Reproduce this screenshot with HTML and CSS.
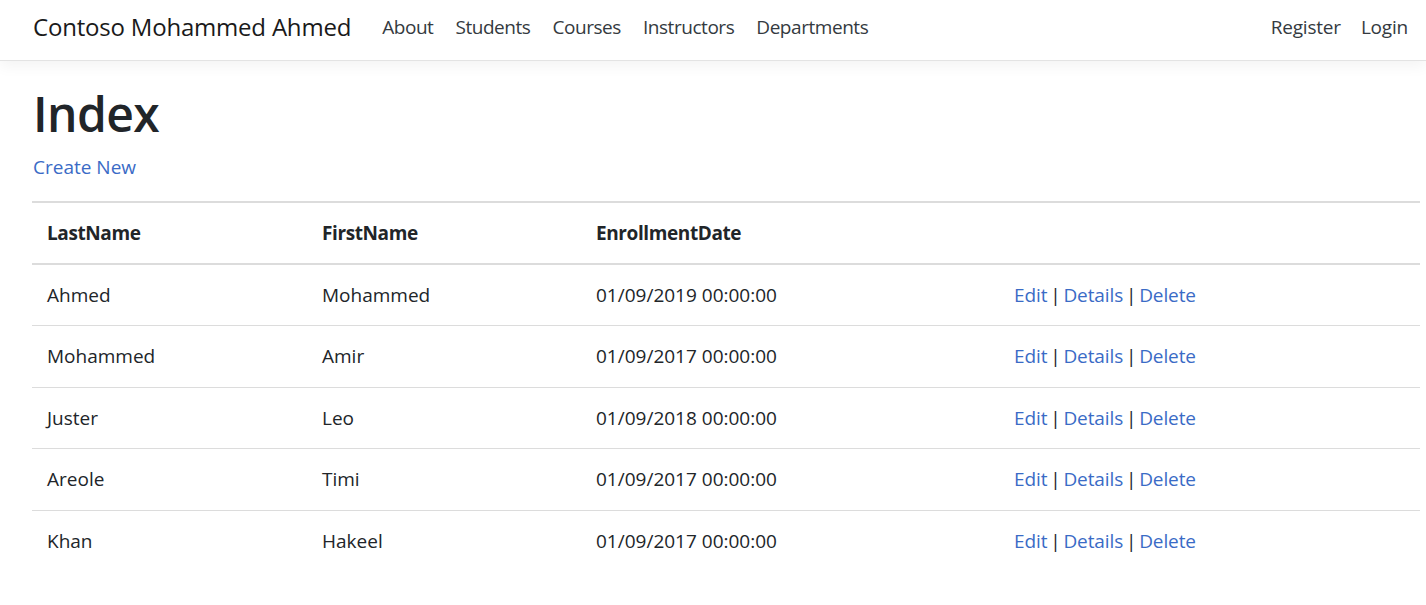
FILE: index.html
```html
<!DOCTYPE html>
<html lang="en">
<head>
<meta charset="utf-8">
<title>Index - Contoso</title>
<link rel="stylesheet" href="styles.css">
</head>
<body>
<header class="navbar">
  <a class="brand" href="#">Contoso Mohammed Ahmed</a>
  <nav class="nav-main">
    <a class="nav-link" href="#">About</a>
    <a class="nav-link" href="#">Students</a>
    <a class="nav-link" href="#">Courses</a>
    <a class="nav-link" href="#">Instructors</a>
    <a class="nav-link" href="#">Departments</a>
  </nav>
  <nav class="nav-user">
    <a class="nav-link" href="#">Register</a>
    <a class="nav-link" href="#">Login</a>
  </nav>
</header>
<main class="container">
  <h1 class="title">Index</h1>
  <p class="create"><a href="#">Create New</a></p>
  <table class="table">
    <thead>
      <tr>
        <th class="c1">LastName</th>
        <th class="c2">FirstName</th>
        <th class="c3">EnrollmentDate</th>
        <th class="c4"></th>
      </tr>
    </thead>
    <tbody>
      <tr><td>Ahmed</td><td>Mohammed</td><td>01/09/2019 00:00:00</td><td class="actions"><a href="#">Edit</a> | <a href="#">Details</a> | <a href="#">Delete</a></td></tr>
      <tr><td>Mohammed</td><td>Amir</td><td>01/09/2017 00:00:00</td><td class="actions"><a href="#">Edit</a> | <a href="#">Details</a> | <a href="#">Delete</a></td></tr>
      <tr><td>Juster</td><td>Leo</td><td>01/09/2018 00:00:00</td><td class="actions"><a href="#">Edit</a> | <a href="#">Details</a> | <a href="#">Delete</a></td></tr>
      <tr><td>Areole</td><td>Timi</td><td>01/09/2017 00:00:00</td><td class="actions"><a href="#">Edit</a> | <a href="#">Details</a> | <a href="#">Delete</a></td></tr>
      <tr><td>Khan</td><td>Hakeel</td><td>01/09/2017 00:00:00</td><td class="actions"><a href="#">Edit</a> | <a href="#">Details</a> | <a href="#">Delete</a></td></tr>
    </tbody>
  </table>
</main>
</body>
</html>
```

FILE: styles.css
```css
* { box-sizing: border-box; }

html, body {
  margin: 0;
  background: #fff;
}

body {
  font-family: "Open Sans", "Noto Sans", "Liberation Sans", sans-serif;
  font-size: 19px;
  line-height: 1.5;
  color: #212529;
}

a {
  color: #3a6bc6;
  text-decoration: none;
}

.navbar {
  display: flex;
  align-items: center;
  height: 61px;
  padding: 0 8px 0 33px;
  border-bottom: 1px solid #e3e3e3;
  box-shadow: 0 5px 14px rgba(0, 0, 0, 0.05);
  background: #fff;
}

.brand {
  font-size: 24px;
  color: #1a1a1a;
  margin-right: 20px;
  letter-spacing: -0.2px;
  padding-bottom: 6px;
}

.nav-main,
.nav-user {
  display: flex;
}

.nav-main { flex: 1; }

.nav-link {
  color: #343a40;
  padding: 0 11px 6px;
  font-size: 19px;
  letter-spacing: -0.45px;
}

.nav-user .nav-link { padding: 0 10px 6px; letter-spacing: -0.2px; }

.container {
  padding: 24px 6px 0 32px;
}

.title {
  margin: 0 0 10px 1px;
  font-size: 48px;
  font-weight: 600;
  line-height: 1.2;
  letter-spacing: -0.6px;
}

.create {
  margin: 0 0 20px 1px;
}

.table {
  width: 100%;
  border-collapse: collapse;
}

.table th,
.table td {
  text-align: left;
  padding: 16px 15px;
  vertical-align: top;
  border-top: 1px solid #dcdcdc;
  white-space: nowrap;
}

.table thead th {
  font-weight: 700;
  border-top: 2px solid #dcdcdc;
  border-bottom: 2px solid #dcdcdc;
  padding: 16px 15px 15px;
  letter-spacing: -0.4px;
}

.table tbody tr:first-child td { border-top: 0; }

.table td.actions {
  word-spacing: -2px;
  letter-spacing: -0.1px;
}

.c1 { width: 275px; }
.c2 { width: 274px; }
.c3 { width: 418px; }
```
